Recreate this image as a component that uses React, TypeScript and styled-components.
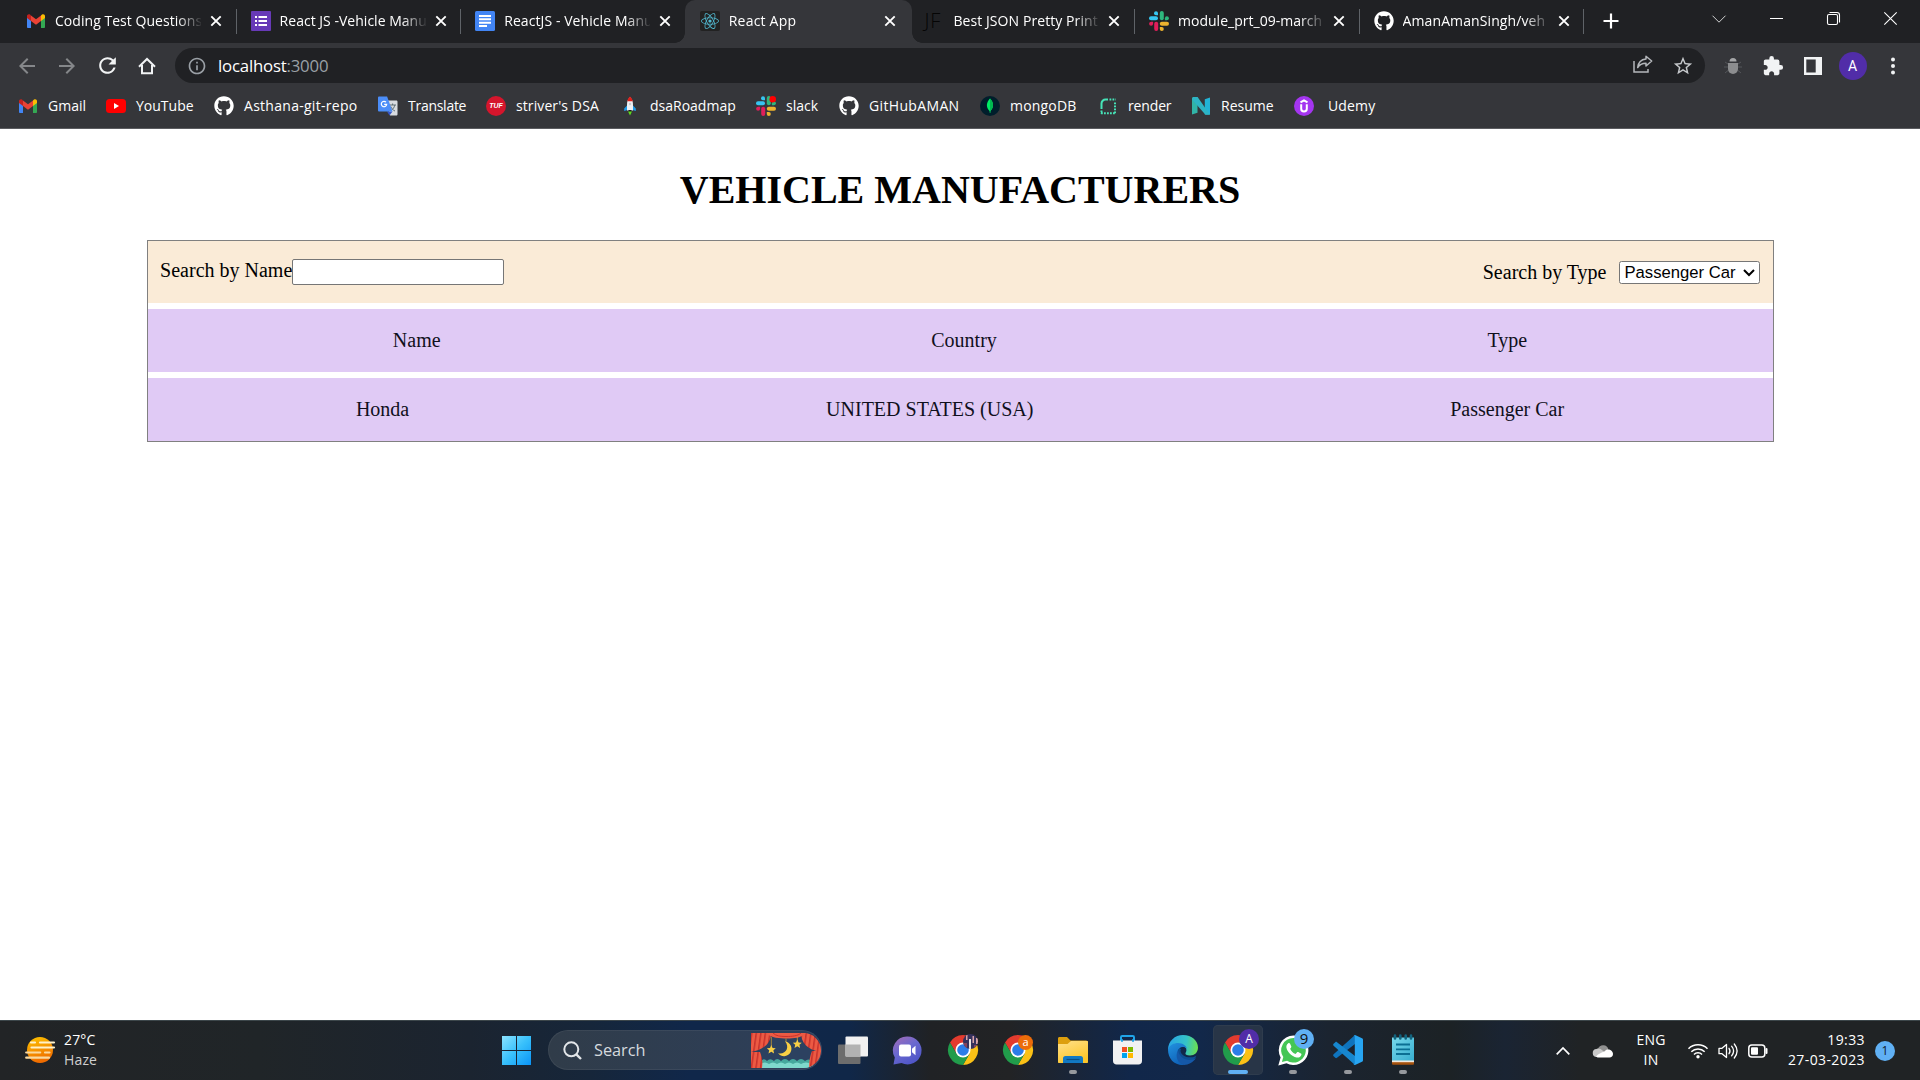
import React from "react";
import styled, { createGlobalStyle, css } from "styled-components";
import { FaGithub, FaReact } from "react-icons/fa";
import { MdArrowBack, MdArrowForward, MdExtension, MdInfoOutline, MdRefresh, MdStarBorder } from "react-icons/md";

const Global = createGlobalStyle`
  *, *::before, *::after { box-sizing: border-box; }
  body { margin: 0; background: #fff; overflow: hidden; }
  svg { display: block; flex: none; overflow: visible; }
`;

const Screen = styled.div`
  width: 1920px;
  height: 1080px;
  display: flex;
  flex-direction: column;
  font-family: "Open Sans", "Noto Sans", sans-serif;
  font-size: 14px;
  color: #fff;
`;

/* ---------- browser chrome ---------- */

const TabStrip = styled.div`
  height: 43px;
  flex: none;
  background: #202124;
  display: flex;
  padding-left: 11px;
`;

const TabBox = styled.div<{ $active?: boolean; $divider?: boolean }>`
  position: relative;
  width: 224.6px;
  flex: none;
  display: flex;
  align-items: center;
  padding: 0 0 1px 15px;
  ${(p) =>
    p.$divider &&
    css`
      &::after {
        content: "";
        position: absolute;
        right: -1px;
        top: 9px;
        width: 1px;
        height: 25px;
        background: #5f6368;
      }
    `}
  ${(p) =>
    p.$active &&
    css`
      width: 227px;
      margin-right: -2.4px;
      background: #35363a;
      border-radius: 10px 10px 0 0;
      &::before,
      &::after {
        content: "";
        position: absolute;
        bottom: 0;
        width: 10px;
        height: 10px;
      }
      &::before {
        left: -10px;
        background: radial-gradient(circle at 0 0, transparent 9.5px, #35363a 10px);
      }
      &::after {
        right: -10px;
        background: radial-gradient(circle at 100% 0, transparent 9.5px, #35363a 10px);
      }
    `}
`;

const TabTitle = styled.span<{ $spacing?: number }>`
  margin-left: 9px;
  width: 146px;
  overflow: hidden;
  white-space: nowrap;
  line-height: 20px;
  letter-spacing: ${(p) => p.$spacing ?? 0}px;
  mask-image: linear-gradient(to right, #000 122px, transparent 148px);
`;

const TabClose = styled.span`
  margin-left: 9px;
  width: 12px;
  display: flex;
`;

const NewTab = styled.div`
  width: 56px;
  display: flex;
  align-items: center;
  justify-content: center;
  padding-bottom: 1px;
`;

const WindowButtons = styled.div`
  margin-left: auto;
  margin-right: 0.5px;
  display: flex;
`;

const WindowButton = styled.div`
  width: 57.2px;
  height: 37px;
  display: flex;
  align-items: center;
  justify-content: center;
`;

const Toolbar = styled.div`
  height: 45px;
  flex: none;
  background: #35363a;
  display: flex;
  align-items: center;
  padding-left: 7px;
`;

const ToolButton = styled.div<{ $dim?: boolean }>`
  width: 40px;
  display: flex;
  justify-content: center;
  color: ${(p) => (p.$dim ? "#85878a" : "#f1f3f4")};
`;

const Omnibox = styled.div`
  width: 1530px;
  height: 35px;
  margin-left: 8px;
  border-radius: 18px;
  background: #202124;
  display: flex;
  align-items: center;
  padding: 0 2px 0 12px;
  color: #9aa0a6;
`;

const Url = styled.span`
  margin-left: 11px;
  font-size: 16.8px;
  line-height: 24px;
  letter-spacing: -0.2px;
  color: #9aa0a6;
  b {
    font-weight: 400;
    color: #fff;
  }
`;

const OmniActions = styled.div`
  margin-left: auto;
  display: flex;
  color: #bdc1c6;
`;

const Extensions = styled.div`
  display: flex;
  align-items: center;
  margin-left: 7.5px;
`;

const Avatar = styled.div`
  width: 28px;
  height: 28px;
  border-radius: 50%;
  background: #512da8;
  font: 14px/28px Roboto, sans-serif;
  text-align: center;
  color: #fff;
`;

const BookmarkBar = styled.div`
  height: 41px;
  flex: none;
  background: #35363a;
  border-bottom: 1px solid #5b5c60;
  display: flex;
  align-items: center;
  padding: 0 0 4px 18px;
`;

const BookmarkItem = styled.div<{ $width: number }>`
  width: ${(p) => p.$width}px;
  display: flex;
  align-items: center;
  gap: 10px;
  white-space: nowrap;
  line-height: 20px;
`;

const BookmarkText = styled.span<{ $spacing?: number; $inset?: number }>`
  letter-spacing: ${(p) => p.$spacing ?? 0}px;
  padding-left: ${(p) => p.$inset ?? 0}px;
`;

/* ---------- page ---------- */

const Page = styled.main`
  flex: 1;
  background: #fff;
  color: #000;
  font: 20px/23px "Liberation Serif", serif;
  display: flex;
  flex-direction: column;
  align-items: center;
`;

const Heading = styled.h1`
  margin: 38px 0 27px;
  font-size: 40px;
  line-height: 46px;
  font-weight: 700;
`;

const Panel = styled.section`
  width: 1627px;
  border: 1px solid #808080;
  display: flex;
  flex-direction: column;
  gap: 6px;
`;

const Filters = styled.div`
  height: 62px;
  background: #faebd7;
  display: flex;
  justify-content: space-between;
  align-items: center;
  padding: 0 13px 0 12px;
`;

const NameFilter = styled.label`
  display: flex;
  align-items: center;
  padding-bottom: 3px;
`;

const TypeFilter = styled.label`
  display: flex;
  align-items: center;
  gap: 13px;
`;

const FilterText = styled.span<{ $shift?: number }>`
  padding-left: ${(p) => p.$shift ?? 0}px;
  margin-right: ${(p) => -(p.$shift ?? 0)}px;
`;

const NameInput = styled.input`
  width: 212px;
  height: 26px;
  margin-top: 3px;
  border: 1px solid #767676;
  border-radius: 2px;
  background: #fff;
`;

const TypeSelect = styled.select`
  zoom: 1.25;
  width: 112.8px;
  height: 18.4px;
  padding: 0;
  font: 13.333px "Liberation Sans", Arial, sans-serif;
  color: #000;
  background: #fff;
  border: 1px solid #767676;
  border-radius: 2px;
`;

const Row = styled.div`
  height: 63px;
  background: #e0caf5;
  color: #10101c;
  display: flex;
  justify-content: space-around;
  align-items: center;
  padding-bottom: 1px;
`;

/* ---------- taskbar ---------- */

const Taskbar = styled.footer`
  height: 60px;
  flex: none;
  border-top: 1px solid #3c464a;
  background: linear-gradient(
    to right,
    #222426 0,
    #202528 260px,
    #1b2430 470px,
    #16263a 590px,
    #10274a 690px,
    #102748 850px,
    #202225 930px,
    #222325 1010px,
    #11274a 1130px,
    #12284a 1200px,
    #1b2430 1330px,
    #1c2225 1450px,
    #1a2433 1505px,
    #202325 1580px,
    #202325 1920px
  );
  display: flex;
  align-items: center;
`;

const Weather = styled.div`
  width: 491px;
  display: flex;
  align-items: center;
  gap: 9px;
  padding: 0 0 2px 25px;
  line-height: 20px;
  color: #cfcfcf;
  letter-spacing: 0.15px;
  b {
    display: block;
    font-weight: 400;
    color: #fff;
  }
`;

const Apps = styled.div`
  display: flex;
  align-items: center;
  gap: 5px;
  padding-bottom: 1px;
`;

const AppButton = styled.div<{ $active?: boolean }>`
  position: relative;
  width: 50px;
  height: 50px;
  display: flex;
  align-items: center;
  justify-content: center;
  border-radius: 5px;
  ${(p) =>
    p.$active &&
    css`
      background: #283547;
      box-shadow: inset 0 0 0 1px #2f3c4d;
    `}
`;

const Indicator = styled.i<{ $active?: boolean }>`
  position: absolute;
  left: 50%;
  bottom: 1px;
  height: 4px;
  width: ${(p) => (p.$active ? 20 : 8)}px;
  transform: translateX(-50%);
  border-radius: 2px;
  background: ${(p) => (p.$active ? "#60b0f4" : "#96999e")};
`;

const Badge = styled.span<{ $bg: string; $color: string; $size: number; $font: number }>`
  position: absolute;
  right: ${(p) => (p.$size < 20 ? 10 : 4)}px;
  top: ${(p) => (p.$size < 20 ? 10 : 4)}px;
  width: ${(p) => p.$size}px;
  height: ${(p) => p.$size}px;
  border-radius: 50%;
  background: ${(p) => p.$bg};
  color: ${(p) => p.$color};
  font-size: ${(p) => p.$font}px;
  line-height: ${(p) => p.$size - 1}px;
  text-align: center;
`;

const SearchBox = styled.div`
  width: 274px;
  height: 40px;
  margin: 0 1px 0 2px;
  border-radius: 20px;
  background: linear-gradient(to right, #303c49, #2d3f5b);
  box-shadow: inset 0 0 0 1px rgba(255, 255, 255, 0.06);
  display: flex;
  align-items: center;
  padding: 0 1px 0 15px;
  color: #d6dade;
  font-size: 16.3px;
`;

const SearchLabel = styled.span`
  flex: 1;
  margin-left: 12px;
`;

const Tray = styled.div`
  margin-left: auto;
  display: flex;
  align-items: center;
  padding-right: 25px;
`;

const TrayIcon = styled.div<{ $width: number }>`
  width: ${(p) => p.$width}px;
  display: flex;
  justify-content: center;
`;

const TrayText = styled.div<{ $width: number; $align: string; $spacing?: number }>`
  width: ${(p) => p.$width}px;
  text-align: ${(p) => p.$align};
  line-height: 20px;
  padding-bottom: 1px;
  letter-spacing: ${(p) => p.$spacing ?? 0}px;
`;

const Notice = styled.div`
  width: 20px;
  height: 20px;
  margin-left: 10px;
  border-radius: 50%;
  background: #60b0f4;
  color: #10202c;
  font-size: 12px;
  line-height: 19px;
  text-align: center;
`;

/* ---------- icons ---------- */

const Gmail = () => (
  <svg width="20" height="20" viewBox="0 0 20 20">
    <path d="M1 6v10.2c0 .5.4.8.8.8H5V9z" fill="#4285f4" />
    <path d="M19 6v10.2c0 .5-.4.8-.8.8H15V9z" fill="#34a853" />
    <path d="M15 4.5 16 3.6c1.300-1 3-.2 3 1.500V7l-4 3z" fill="#fbbc04" />
    <path d="M5 4.500 4 3.600C2.700 2.700 1 3.500 1 5.100V7l4 3z" fill="#c5221f" />
    <path d="M5 4.500l5 3.800 5-3.800V10l-5 3.700L5 10z" fill="#ea4335" />
  </svg>
);

const Forms = () => (
  <svg width="20" height="20" viewBox="0 0 20 20">
    <rect width="20" height="20" rx="1" fill="#673ab7" />
    <path d="M4 5h2v2H4zm0 4h2v2H4zm0 4h2v2H4zM7.500 5H16v2H7.500zm0 4H16v2H7.500zm0 4H16v2H7.500z" fill="#fff" />
  </svg>
);

const Docs = () => (
  <svg width="20" height="20" viewBox="0 0 20 20">
    <rect width="20" height="20" rx="1.500" fill="#4285f4" />
    <path d="M4 4h12v2H4zm0 3.300h12v2H4zm0 3.400h12v2H4zM4 14h8v2H4z" fill="#fff" />
  </svg>
);

const ReactTile = styled.span`
  width: 20px;
  height: 20px;
  border-radius: 2px;
  background: #222;
  color: #52b9d0;
  display: flex;
  align-items: center;
  justify-content: center;
`;

const Jf = styled.span`
  width: 20px;
  font: 20px/20px "Open Sans", sans-serif;
  font-weight: 300;
  color: #050505;
  letter-spacing: 1px;
`;

const Slack = ({ dot }: { dot?: boolean }) => (
  <svg width="20" height="20" viewBox="0 0 20 20">
    <g fill="#36c5f0">
      <rect x="0" y="5.300" width="9" height="4" rx="2" />
      <path d="M9 4.200H7A2 2 0 1 1 9 2.200z" />
    </g>
    <g fill="#2eb67d">
      <rect x="10.800" y="0" width="4" height="9.200" rx="2" />
      <path d="M15.900 9.200v-2a2 2 0 1 1 2 2z" />
    </g>
    <g fill="#ecb22e">
      <rect x="10.800" y="10.800" width="9.200" height="4" rx="2" />
      <path d="M10.800 15.900h2a2 2 0 1 1-2 2z" />
    </g>
    <g fill="#e01e5a">
      <rect x="5.200" y="10.800" width="4" height="9.200" rx="2" />
      <path d="M4.100 10.800v2a2 2 0 1 1-2-2z" />
    </g>
    {dot && <circle cx="16.700" cy="3.200" r="3.300" fill="#f00" />}
  </svg>
);

const YouTube = () => (
  <svg width="20" height="20" viewBox="0 0 20 20">
    <rect y="3" width="20" height="14" rx="3.500" fill="#f00" />
    <path d="M8 7v6l5-3z" fill="#fff" />
  </svg>
);

const Translate = () => (
  <svg width="20" height="20" viewBox="0 0 20 20">
    <path d="M9 4.500h9.200c.8 0 1.300.5 1.300 1.300v12.400c0 .8-.5 1.300-1.300 1.300H12z" fill="#d8dbe0" />
    <path d="M11.500 9h6.500M14.600 7.500V9m2.200 0c-.5 2.600-2 4.500-3.800 5.700M12.800 10.500c.8 2 2.200 3.500 4.200 4.600" stroke="#5f6f75" fill="none" />
    <path d="M9 15.500h5.500l-3 4z" fill="#3856c5" />
    <path d="M1.300.5h7.800l5.400 15H1.300C.5 15.500 0 15 0 14.200V1.800C0 1 .5.500 1.300.500z" fill="#4b8df8" />
    <path d="M8 6.200A2.700 2.700 0 1 0 8.700 8.300H6.200" stroke="#fff" strokeWidth="1.200" fill="none" />
  </svg>
);

const Tuf = styled.span`
  width: 20px;
  height: 20px;
  border-radius: 50%;
  background: #d5152c;
  color: #fff;
  font: italic 700 7px/20px "Liberation Sans", sans-serif;
  text-align: center;
`;

const Rocket = () => (
  <svg width="20" height="20" viewBox="0 0 20 20">
    <path d="M7.500 9 4.200 12.500V15l3.300-1zM12.500 9l3.300 3.500V15l-3.300-1z" fill="#1e9be8" />
    <path d="M10 1C7.500 3.500 7 6 7 9v5.500h6V9c0-3-.5-5.500-3-8z" fill="#eef1f4" />
    <path d="M10 .500C8.300 2.200 7.600 3.500 7.300 5.200h5.400C12.400 3.500 11.700 2.200 10 .500z" fill="#e0201b" />
    <circle cx="10" cy="8" r="1.200" fill="#c7ccd2" />
    <path d="M8.500 14h3v2.500h-3z" fill="#1d1d1d" />
    <path d="M8 15.500h4l-2 4z" fill="#5edc1f" />
  </svg>
);

const Mongo = () => (
  <svg width="20" height="20" viewBox="0 0 20 20">
    <circle cx="10" cy="10" r="10" fill="#001e2b" />
    <path d="M10 2.500c3.700 4 4.400 8.500.4 12.500L10.200 17h-.4L9.600 15C5.600 11 6.300 6.500 10 2.500z" fill="#00ed64" />
    <path d="M10 2.500c3.700 4 4.400 8.500.4 12.500L10.200 17H10z" fill="#00b850" />
  </svg>
);

const Render = () => (
  <svg width="20" height="20" viewBox="0 0 20 20" fill="none" stroke="#46e3b7" strokeWidth="2">
    <path d="M3.500 13V7.500a4 4 0 0 1 4-4H10" />
    <path d="M11.500 3.500H18M17 6.500V18M3.500 14.500V18M3 17.200h14" strokeDasharray="1.800 1.200" />
  </svg>
);

const Resume = () => (
  <svg width="20" height="20" viewBox="0 0 20 20">
    <path d="M1 1.500h5.500v15.200L1 18.500z" fill="#31b5a8" />
    <path d="M13.800 3.200 19 1.500v17h-5.200z" fill="#22b3d6" />
    <path d="M2 1h4.600L19 18.800h-4.500L1 3.500z" fill="#2db4c4" />
  </svg>
);

const Udemy = () => (
  <svg width="20" height="20" viewBox="0 0 20 20">
    <circle cx="10" cy="10" r="10" fill="#a435f0" />
    <path d="M6.500 6.300 10 4.300l3.500 2M7.200 8.300v4.400a2.800 2.800 0 0 0 5.600 0V8.300" stroke="#fff" strokeWidth="2" fill="none" />
  </svg>
);

const Cross = () => (
  <svg width="12" height="12" viewBox="0 0 12 12" stroke="#fff" strokeWidth="1.900">
    <path d="M1.300 1.300l9.400 9.400M10.700 1.300l-9.400 9.400" />
  </svg>
);

const ChromeLogo = () => (
  <svg width="30" height="30" viewBox="0 0 30 30">
    <path d="M15 7.500H28A15 15 0 0 1 15 30L21.500 18.750z" fill="#fbc116" />
    <path d="M2 7.500A15 15 0 0 1 28 7.500H15L8.500 18.750z" fill="#e33b2e" />
    <path d="M2 7.500A15 15 0 0 0 15 30L21.500 18.750H8.500z" fill="#219c4b" />
    <circle cx="15" cy="15" r="7.500" fill="#fff" />
    <circle cx="15" cy="15" r="5.800" fill="#2b7de9" />
  </svg>
);

const Haze = () => (
  <svg width="30" height="30" viewBox="0 0 30 30">
    <defs>
      <linearGradient id="sun" x1="0" y1="0" x2="0.300" y2="1">
        <stop offset="0" stopColor="#fdc500" />
        <stop offset="1" stopColor="#ef6c00" />
      </linearGradient>
    </defs>
    <circle cx="15" cy="15" r="13" fill="url(#sun)" />
    <g strokeWidth="2.200" strokeLinecap="round">
      <path d="M6 7.500h4M15 7.500h14M6.500 12.500h22.500" stroke="#fff1c8" />
      <path d="M1.200 17.500h14M20 17.500h4.500M1.200 22.700H24" stroke="#f9d9a0" />
    </g>
  </svg>
);

const Windows = () => (
  <svg width="29" height="29" viewBox="0 0 29 29">
    <defs>
      <linearGradient id="win" x1="0" y1="0" x2="1" y2="1">
        <stop offset="0" stopColor="#8be3ff" />
        <stop offset="0.500" stopColor="#38c0fb" />
        <stop offset="1" stopColor="#0a94f7" />
      </linearGradient>
    </defs>
    <path d="M0 0h14v14H0zM15 0h14v14H15zM0 15h14v14H0zM15 15h14v14H15z" fill="url(#win)" />
  </svg>
);

const Curtains = () => (
  <svg width="70" height="35" viewBox="0 0 70 35">
    <defs>
      <clipPath id="stage">
        <path d="M0 0h52.500a17.500 17.500 0 0 1 0 35H0z" />
      </clipPath>
      <pattern id="folds" width="4.500" height="8" patternUnits="userSpaceOnUse" patternTransform="rotate(8)">
        <rect width="4.500" height="8" fill="#ec5a43" />
        <rect width="1.500" height="8" fill="#c8322c" />
      </pattern>
    </defs>
    <g clipPath="url(#stage)">
      <rect width="70" height="35" fill="#2c4160" />
      <path d="M10 28q3-3.500 6 0 3-3.500 7 0 3-4 7 0 4-4 8 0 4-4 8 0 4-4 8 0 3-3 8 0v8H10z" fill="#46a89d" />
      <path d="M10 31q4-3 8 0 4-3 8 0 4-3 8 0 4-3 8 0 4-3 8 0 4-3 12 0v5H10z" fill="#7fd9cc" />
      <path d="M0 0h20c0 9-5 16-20 19zM50 0h20v19C56 17 50 9 50 0z" fill="url(#folds)" />
      <path d="M0 19h9c2 5 3 10 2 16H0zM61 18h9v17H58c0-7 1-12 3-17z" fill="url(#folds)" />
      <path d="M15 0h40c-5 5-12 5.500-19 5.500S20 5 15 0z" fill="#ec5a43" />
      <path d="M22 0c3 3 7 3.500 13 3.500S47 3 50 0" stroke="#c8322c" fill="none" />
      <path d="M20.300 4v9M46.300 4v4M35 5.500v3" stroke="#c99a32" strokeWidth="0.800" />
      <path d="M34 8.300a7.500 7.500 0 1 1-7 12c8 1.500 12-6 7-12z" fill="#f8cf45" />
      <path d="M20.300 12l1.300 2.900 3.200.3-2.400 2.100.7 3.100-2.800-1.600-2.800 1.600.7-3.100-2.400-2.100 3.200-.3zM46.300 6.500l1.300 2.900 3.200.3-2.400 2.100.7 3.100-2.800-1.600-2.800 1.600.7-3.100-2.400-2.100 3.200-.3z" fill="#f8cf45" />
    </g>
  </svg>
);

const TaskView = () => (
  <svg width="30" height="29" viewBox="0 0 30 29">
    <rect y="8.500" width="22.500" height="19.500" rx="1" fill="#6d6d6d" />
    <rect x="7.500" y=".5" width="22.500" height="20" rx="1" fill="#f1f1f1" />
    <rect x="7.500" y="8.500" width="15" height="12" fill="#b2b2b2" />
  </svg>
);

const Chat = () => (
  <svg width="30" height="29" viewBox="0 0 30 29">
    <defs>
      <linearGradient id="chat" x1="0" y1="0" x2="0.600" y2="1">
        <stop offset="0" stopColor="#a66bb5" />
        <stop offset="0.500" stopColor="#6b69cf" />
        <stop offset="1" stopColor="#4f56c8" />
      </linearGradient>
    </defs>
    <path d="M14.500.500a14 14 0 1 1-6 26.600L.500 28.500l1.300-7A14 14 0 0 1 14.500.500z" fill="url(#chat)" />
    <rect x="6" y="8.500" width="12" height="12" rx="2" fill="#fff" />
    <path d="M19 12.700l3.500-3v9.600l-3.500-3z" fill="#fff" />
  </svg>
);

const Explorer = () => (
  <svg width="30" height="28" viewBox="0 0 30 28">
    <defs>
      <linearGradient id="folder" x1="0" y1="0" x2="0.500" y2="1">
        <stop offset="0" stopColor="#ffe08a" />
        <stop offset="1" stopColor="#fcc62b" />
      </linearGradient>
    </defs>
    <path d="M0 2.500C0 1.500.7 1 1.500 1H9l3.500 3.500H28c1.200 0 2 .8 2 2V12H0z" fill="#dd9f0e" />
    <path d="M0 8h9.500L13 5h16c.7 0 1 .4 1 1v20c0 .7-.4 1-1 1H1c-.6 0-1-.3-1-1z" fill="url(#folder)" />
    <path d="M5 27v-4.500A2.500 2.500 0 0 1 7.500 20h15a2.500 2.500 0 0 1 2.500 2.500V27z" fill="#1279c4" />
    <path d="M8.500 23.500h13" stroke="#0a4f86" strokeWidth="1.200" />
  </svg>
);

const Store = () => (
  <svg width="30" height="30" viewBox="0 0 30 30">
    <path d="M8 6.500V2.300c0-.8.4-1.200 1.200-1.200h10.600c.8 0 1.200.4 1.200 1.200v4.200" stroke="#20a4e8" strokeWidth="2" fill="none" />
    <path d="M0 5.500h29V26c0 2-1.500 3.500-3.500 3.500h-22C1.500 29.500 0 28 0 26z" fill="#f1f1f2" />
    <path d="M8 5.500h2M19 5.500h2" stroke="#20a4e8" strokeWidth="2.500" />
    <path d="M9 12h5v5H9z" fill="#f25022" />
    <path d="M15 12h5v5h-5z" fill="#7fba00" />
    <path d="M9 18h5v5H9z" fill="#00a4ef" />
    <path d="M15 18h5v5h-5z" fill="#ffb900" />
  </svg>
);

const Edge = () => (
  <svg width="30" height="30" viewBox="0 0 30 30">
    <defs>
      <linearGradient id="edgeTop" x1="0" y1="0.400" x2="1" y2="0.500">
        <stop offset="0" stopColor="#28a4e6" />
        <stop offset="0.600" stopColor="#35c4c8" />
        <stop offset="1" stopColor="#6be04e" />
      </linearGradient>
      <linearGradient id="edgeLeft" x1="0" y1="0" x2="0.500" y2="1">
        <stop offset="0" stopColor="#2292e0" />
        <stop offset="1" stopColor="#0f62b8" />
      </linearGradient>
    </defs>
    <path d="M0 15C0 6 7 0 15 0c9 0 15 6 15 12.500 0 5-3.500 8-8 8-3.500 0-5-1.300-4.500-2.500 2.500-4-.5-7.500-5-7.500C6 10.500 1 13 0 15z" fill="url(#edgeTop)" />
    <path d="M0 14.500C1.500 10 6 8 10 8c5 0 8.500 3 9 6-2-2.500-5.500-2.500-7.500-.5-3 3-1.500 11 5 15.500l-2 1C6 30 0 23.500 0 14.500z" fill="url(#edgeLeft)" />
    <path d="M10.500 14c-3 7 3 13.500 10 12.500 3-.4 5.500-2 7.500-4.500.5-.5 0-1-.5-.8-7 3-14.500-.2-15-5.200 0-1 .3-1.600.7-2.300z" fill="#0d4f94" />
    <path d="M10 14.800C6.500 22 10 28.500 16 30c4.500-.2 9.500-3 12-7-6 4-16.500 2-18-8.200z" fill="#1558a8" />
  </svg>
);

const WhatsApp = () => (
  <svg width="31" height="31" viewBox="0 0 31 31">
    <path d="M15.500.500a14.800 14.800 0 1 1-7 27.800L.300 30.500l2.300-8A14.800 14.800 0 0 1 15.500.500z" fill="#fff" />
    <path d="M15.500 3a12.300 12.300 0 1 1-6.400 22.800L3.900 27.100l1.400-5A12.300 12.300 0 0 1 15.500 3z" fill="#45c655" />
    <path d="M10 8.500c.8-.7 1.800-.4 2.100.3l1.200 2.700c.2.500 0 .9-1.200 2.300 1.200 2.600 3 4.300 5.500 5.300l1.500-1.800c.3-.4.700-.4 1.100-.2l2.700 1.300c.6.300.7.600.4 1.500-.6 2-2.600 2.900-4.700 2.500C13.500 21.500 9.200 17 8.400 12.500c-.2-1.600.4-3 1.600-4z" fill="#fff" />
  </svg>
);

const VsCode = () => (
  <svg width="30" height="30" viewBox="0 0 30 30">
    <path d="M22 0v9L4 22.800c-.6.500-1.200.4-1.700 0L.600 21.200c-.6-.6-.6-1.300 0-1.900z" fill="#0f74bd" />
    <path d="M22 30v-9L4 7.200c-.6-.5-1.200-.4-1.700 0L.600 8.800c-.6.600-.6 1.300 0 1.900z" fill="#1787cf" />
    <path d="M22 0l7 3.300c.7.300 1 .8 1 1.500v20.400c0 .7-.3 1.200-1 1.500L22 30c-.8.200-1.500 0-2-.500.800.6 1.800.1 1.800-.9V1.400c0-1-1-1.500-1.800-.9.500-.5 1.200-.7 2-.5z" fill="#27a5f2" />
  </svg>
);

const Notepad = () => (
  <svg width="22" height="30" viewBox="0 0 22 30">
    <defs>
      <linearGradient id="note" x1="0" y1="0" x2="1" y2="1">
        <stop offset="0" stopColor="#77d8ea" />
        <stop offset="1" stopColor="#38aed0" />
      </linearGradient>
    </defs>
    <path d="M0 24h22v4.500c0 .8-.5 1.300-1.300 1.300H1.300C.5 29.800 0 29.300 0 28.500z" fill="#a5520d" />
    <path d="M0 24h22v3.200H0z" fill="#f0e9e1" />
    <path d="M0 2.500h22v23H0z" fill="url(#note)" />
    <path d="M4 9.500h14M4 14.300h14M4 19h14" stroke="#0b6f93" strokeWidth="1.800" />
    <path d="M3 .500v3M8.300.500v3M13.700.500v3M19 .500v3" stroke="#11647f" strokeWidth="2.600" strokeLinecap="round" />
  </svg>
);

const PhotoBadge = () => (
  <svg width="15" height="15" viewBox="0 0 15 15">
    <clipPath id="photo">
      <circle cx="7.500" cy="7.500" r="7.500" />
    </clipPath>
    <g clipPath="url(#photo)">
      <path d="M0 0h15v15H0z" fill="#35315c" />
      <path d="M3 1h1.500v5H3zM9.500 2H11v7H9.500zM13 4h2v6h-2z" fill="#d9a5a8" />
      <path d="M6 5h2v10H6z" fill="#ece6e4" />
      <path d="M0 9h4v6H0zM11 11h3v4h-3z" fill="#84445d" />
    </g>
  </svg>
);

const PhotoSlot = styled.span`
  position: absolute;
  left: 25px;
  top: 9px;
`;

/* ---------- data ---------- */

const tabs = [
  { title: "Coding Test Questions", icon: <Gmail />, divider: true, spacing: 0.04 },
  { title: "React JS -Vehicle Manu", icon: <Forms />, divider: true, spacing: 0.02 },
  { title: "ReactJS - Vehicle Manu", icon: <Docs />, spacing: 0.08 },
  { title: "React App", icon: <ReactTile><FaReact size={18} /></ReactTile>, active: true, spacing: 0.2 },
  { title: "Best JSON Pretty Print", icon: <Jf>JF</Jf>, divider: true, spacing: 0.08 },
  { title: "module_prt_09-march", icon: <Slack />, divider: true, spacing: 0.02 },
  { title: "AmanAmanSingh/veh", icon: <FaGithub size={20} />, divider: true, spacing: 0.1 },
];

const bookmarks = [
  { label: "Gmail", icon: <Gmail />, width: 88 },
  { label: "YouTube", icon: <YouTube />, width: 108 },
  { label: "Asthana-git-repo", icon: <FaGithub size={20} />, width: 164, spacing: 0.28 },
  { label: "Translate", icon: <Translate />, width: 108, spacing: -0.27 },
  { label: "striver's DSA", icon: <Tuf>TUF</Tuf>, width: 134, spacing: 0.1 },
  { label: "dsaRoadmap", icon: <Rocket />, width: 136 },
  { label: "slack", icon: <Slack dot />, width: 83 },
  { label: "GitHubAMAN", icon: <FaGithub size={20} />, width: 141, spacing: 0.35 },
  { label: "mongoDB", icon: <Mongo />, width: 118, spacing: 0.2 },
  { label: "render", icon: <Render />, width: 93, spacing: -0.15 },
  { label: "Resume", icon: <Resume />, width: 103 },
  { label: "Udemy", icon: <Udemy />, width: 90, inset: 4, spacing: 0.15 },
];

const columns = ["Name", "Country", "Type"];
const manufacturers = [["Honda", "UNITED STATES (USA)", "Passenger Car"]];

export default function App() {
  return (
    <Screen>
      <Global />
      <TabStrip>
        {tabs.map((t) => (
          <TabBox key={t.title} $active={t.active} $divider={t.divider}>
            {t.icon}
            <TabTitle $spacing={t.spacing}>{t.title}</TabTitle>
            <TabClose>
              <Cross />
            </TabClose>
          </TabBox>
        ))}
        <NewTab>
          <svg width="16" height="16" viewBox="0 0 16 16" stroke="#fff" strokeWidth="2.200">
            <path d="M8 .500v15M.500 8h15" />
          </svg>
        </NewTab>
        <WindowButtons>
          <WindowButton>
            <svg width="14" height="8" viewBox="0 0 14 8" fill="none" stroke="#d0d1d2">
              <path d="M.500.700 7 7.200 13.500.700" />
            </svg>
          </WindowButton>
          <WindowButton>
            <svg width="13" height="1" viewBox="0 0 13 1">
              <rect width="13" height="1" fill="#fff" />
            </svg>
          </WindowButton>
          <WindowButton>
            <svg width="13" height="13" viewBox="0 0 13 13" fill="none" stroke="#fff" strokeWidth="1.100">
              <rect x=".5" y="2.500" width="10" height="10" rx="1.500" />
              <path d="M2.500.500H10A2.500 2.500 0 0 1 12.500 3v7.500" />
            </svg>
          </WindowButton>
          <WindowButton>
            <svg width="13" height="13" viewBox="0 0 13 13" stroke="#fff" strokeWidth="1.100">
              <path d="M.300.300l12.400 12.400M12.700.300.300 12.700" />
            </svg>
          </WindowButton>
        </WindowButtons>
      </TabStrip>

      <Toolbar>
        <ToolButton $dim><MdArrowBack size={24} /></ToolButton>
        <ToolButton $dim><MdArrowForward size={24} /></ToolButton>
        <ToolButton><MdRefresh size={25} /></ToolButton>
        <ToolButton>
          <svg width="18" height="18" viewBox="0 0 18 18" fill="none" stroke="#f1f3f4" strokeWidth="2">
            <path d="M1 9.700 9 2l8 7.700M4 8v8.300h10V8" />
          </svg>
        </ToolButton>
        <Omnibox>
          <MdInfoOutline size={20} />
          <Url><b>localhost</b>:3000</Url>
          <OmniActions>
            <ToolButton>
              <svg width="20" height="18" viewBox="0 0 20 18" fill="none" stroke="#b4b7bb" strokeWidth="1.500">
                <path d="M1 6v11h14v-3" />
                <path d="M13 1.200 18.700 6 13 11V8.300c-4 0-6.500 1.200-8.300 4.200.5-4.500 3-8 8.300-8.500z" strokeLinejoin="round" />
              </svg>
            </ToolButton>
            <ToolButton><MdStarBorder size={22} color="#c6c9cc" /></ToolButton>
          </OmniActions>
        </Omnibox>
        <Extensions>
          <ToolButton>
            <svg width="18" height="18" viewBox="0 0 18 18">
              <path d="M5.500 4.500a3.500 3.500 0 0 1 7 0z" fill="#a5a6a8" />
              <path d="M4 6h10v6a5 5 0 0 1-10 0z" fill="#8c8d8f" />
              <path d="M1 5l3 2M0 10h4M1 16l3-2.500M17 5l-3 2M18 10h-4M17 16l-3-2.500" stroke="#54565a" />
            </svg>
          </ToolButton>
          <ToolButton><MdExtension size={22} /></ToolButton>
          <ToolButton>
            <svg width="18" height="18" viewBox="0 0 18 18">
              <path d="M0 0h18v18H0zM2.300 2.500v13h9.400v-13z" fill="#f1f3f4" fillRule="evenodd" />
            </svg>
          </ToolButton>
          <ToolButton><Avatar>A</Avatar></ToolButton>
          <ToolButton>
            <svg width="4" height="18" viewBox="0 0 4 18" fill="#f1f3f4">
              <circle cx="2" cy="2.500" r="2" />
              <circle cx="2" cy="9" r="2" />
              <circle cx="2" cy="15.500" r="2" />
            </svg>
          </ToolButton>
        </Extensions>
      </Toolbar>

      <BookmarkBar>
        {bookmarks.map((b) => (
          <BookmarkItem key={b.label} $width={b.width}>
            {b.icon}
            <BookmarkText $inset={b.inset} $spacing={b.spacing}>{b.label}</BookmarkText>
          </BookmarkItem>
        ))}
      </BookmarkBar>

      <Page>
        <Heading>VEHICLE MANUFACTURERS</Heading>
        <Panel>
          <Filters>
            <NameFilter>
              <FilterText $shift={0.6}>Search by Name</FilterText>
              <NameInput type="text" />
            </NameFilter>
            <TypeFilter>
              <FilterText $shift={1}>Search by Type</FilterText>
              <TypeSelect defaultValue="Passenger Car">
                <option>Passenger Car</option>
                <option>Truck</option>
              </TypeSelect>
            </TypeFilter>
          </Filters>
          <Row>
            {columns.map((c) => (
              <span key={c}>{c}</span>
            ))}
          </Row>
          {manufacturers.map((m) => (
            <Row key={m[0]}>
              {m.map((v) => (
                <span key={v}>{v}</span>
              ))}
            </Row>
          ))}
        </Panel>
      </Page>

      <Taskbar>
        <Weather>
          <Haze />
          <div>
            <b>27°C</b>
            Haze
          </div>
        </Weather>
        <Apps>
          <AppButton><Windows /></AppButton>
          <SearchBox>
            <svg width="19" height="19" viewBox="0 0 19 19" fill="none" stroke="#e3e6e9" strokeWidth="2">
              <circle cx="8.300" cy="8.300" r="7" />
              <path d="M13.300 13.300l4.700 4.700" strokeWidth="2.400" />
            </svg>
            <SearchLabel>Search</SearchLabel>
            <Curtains />
          </SearchBox>
          <AppButton><TaskView /></AppButton>
          <AppButton><Chat /></AppButton>
          <AppButton>
            <ChromeLogo />
            <PhotoSlot><PhotoBadge /></PhotoSlot>
          </AppButton>
          <AppButton>
            <ChromeLogo />
            <Badge $bg="#ec6c0a" $color="#fff" $size={15} $font={11}>a</Badge>
          </AppButton>
          <AppButton><Explorer /><Indicator /></AppButton>
          <AppButton><Store /></AppButton>
          <AppButton><Edge /></AppButton>
          <AppButton $active>
            <ChromeLogo />
            <Badge $bg="#512da8" $color="#fff" $size={20} $font={12}>A</Badge>
            <Indicator $active />
          </AppButton>
          <AppButton>
            <WhatsApp />
            <Badge $bg="#60b0f4" $color="#111" $size={20} $font={15}>9</Badge>
            <Indicator />
          </AppButton>
          <AppButton><VsCode /><Indicator /></AppButton>
          <AppButton><Notepad /><Indicator /></AppButton>
        </Apps>
        <Tray>
          <TrayIcon $width={40}>
            <svg width="14" height="8" viewBox="0 0 14 8" fill="none" stroke="#fff" strokeWidth="1.700">
              <path d="M.700 7.300 7 1l6.300 6.300" />
            </svg>
          </TrayIcon>
          <TrayIcon $width={40}>
            <svg width="20" height="14" viewBox="0 0 20 14">
              <path d="M5 5a5.500 5.500 0 0 1 10.500.500L9 9z" fill="#909090" />
              <path d="M4 13a4 4 0 0 1-.5-8C6 4 8 5 9.500 6.500L16 12z" fill="#c9c9c9" />
              <path d="M3 12.500C7 8 11 8.500 13 6c3-1.500 7 .5 7 4 0 2-1.500 3.500-3.500 3.500H4.500z" fill="#fff" />
            </svg>
          </TrayIcon>
          <TrayText $width={56} $align="center" $spacing={0.2}>
            ENG
            <br />
            IN
          </TrayText>
          <TrayIcon $width={38}>
            <svg width="20" height="16" viewBox="0 0 20 16" fill="none" stroke="#fff" strokeWidth="1.500">
              <path d="M.500 5.800a13.300 13.300 0 0 1 19 0" />
              <path d="M3.300 8.700a9.400 9.400 0 0 1 13.400 0M6 11.500a5.600 5.600 0 0 1 8 0" />
              <circle cx="10" cy="13.700" r="1.700" fill="#fff" stroke="none" />
            </svg>
          </TrayIcon>
          <TrayIcon $width={22}>
            <svg width="20" height="18" viewBox="0 0 20 18" fill="none" stroke="#fff" strokeWidth="1.300">
              <path d="M1 6.300h3L8.500 2.500v13L4 11.700H1z" strokeLinejoin="round" />
              <path d="M11 6.300q2 2.700 0 5.400M13.600 4.200q4 4.800 0 9.600M16.300 2q5.600 7 0 14" strokeLinecap="round" />
            </svg>
          </TrayIcon>
          <TrayIcon $width={38}>
            <svg width="20" height="14" viewBox="0 0 20 14" fill="none" stroke="#fff" strokeWidth="1.500">
              <rect x=".8" y="1" width="16" height="12" rx="3" />
              <rect x="3" y="3.200" width="7" height="7.600" rx="1" fill="#fff" stroke="none" />
              <path d="M18.500 5v4" strokeWidth="2" strokeLinecap="round" />
            </svg>
          </TrayIcon>
          <TrayText $width={88} $align="right" $spacing={0.4}>
            19:33
            <br />
            27-03-2023
          </TrayText>
          <Notice>1</Notice>
        </Tray>
      </Taskbar>
    </Screen>
  );
}
